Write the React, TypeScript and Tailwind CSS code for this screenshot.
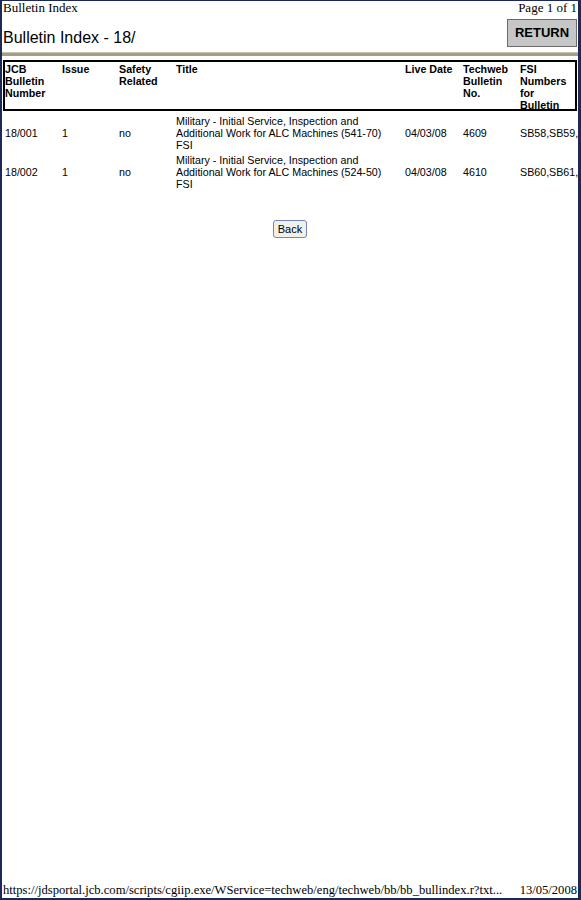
import React from 'react';

const serif = "font-['Liberation_Serif','Times_New_Roman',serif]";
const sans = "font-['Liberation_Sans',Arial,sans-serif]";

const headers = [
  ['JCB', 'Bulletin', 'Number'],
  ['Issue'],
  ['Safety', 'Related'],
  ['Title'],
  ['Live Date'],
  ['Techweb', 'Bulletin', 'No.'],
  ['FSI', 'Numbers', 'for', 'Bulletin'],
];

const rows = [
  {
    num: '18/001',
    issue: '1',
    safety: 'no',
    title: ['Military - Initial Service, Inspection and', 'Additional Work for ALC Machines (541-70)', 'FSI'],
    date: '04/03/08',
    techweb: '4609',
    fsi: 'SB58,SB59,',
  },
  {
    num: '18/002',
    issue: '1',
    safety: 'no',
    title: ['Military - Initial Service, Inspection and', 'Additional Work for ALC Machines (524-50)', 'FSI'],
    date: '04/03/08',
    techweb: '4610',
    fsi: 'SB60,SB61,',
  },
];

const cols = 'grid grid-cols-[57px_57px_57px_229px_58px_57px_1fr]';

export default function App() {
  return (
    <div className="flex h-[900px] w-[581px] flex-col overflow-hidden border-t border-b-2 border-l-2 border-r-[3px] border-[#1c2858] bg-white text-black">
      <div className={`flex items-start justify-between pl-[1px] pr-[1px] text-[13px] leading-[14px] ${serif}`}>
        <span>Bulletin Index</span>
        <span>Page 1 of 1</span>
      </div>

      <div className="flex items-center justify-between pl-[1px] pr-[1px] pt-[4px]">
        <h1 className={`pt-[10px] text-[16px] leading-[18px] ${sans}`}>Bulletin Index - 18/</h1>
        <button
          className={`h-[28px] w-[70px] border border-[#6a6a6a] bg-[#c6c6c6] text-[13px] font-bold ${sans}`}
        >
          RETURN
        </button>
      </div>

      <div className="mt-[5px] h-[4px] border-t border-[#c8c2b0] bg-[#a59d86]" />

      <div className={`px-[1px] pt-[4px] text-[10.7px] leading-[12px] ${sans}`}>
        <div className={`${cols} h-[51px] border-2 border-black pt-[1px] font-bold`}>
          {headers.map((h, i) => (
            <div key={i}>
              {h.map((l) => (
                <div key={l}>{l}</div>
              ))}
            </div>
          ))}
        </div>

        <div className="pt-[4px] pl-[2px]">
          {rows.map((r) => (
            <div key={r.num} className={`${cols} items-center pb-[3px]`}>
              <div>{r.num}</div>
              <div>{r.issue}</div>
              <div>{r.safety}</div>
              <div>
                {r.title.map((t) => (
                  <div key={t}>{t}</div>
                ))}
              </div>
              <div>{r.date}</div>
              <div>{r.techweb}</div>
              <div className="whitespace-nowrap">{r.fsi}</div>
            </div>
          ))}
        </div>

        <div className="flex justify-center pt-[27px]">
          <button
            className={`h-[18px] rounded-[3px] border border-[#7088b8] bg-[#f1f0ea] px-[4px] text-[11px] leading-[14px] ${sans}`}
          >
            Back
          </button>
        </div>
      </div>

      <div className={`mt-auto flex items-end justify-between whitespace-nowrap pl-[1px] pr-[1px] text-[12.6px] leading-[15px] ${serif}`}>
        <span>https://jdsportal.jcb.com/scripts/cgiip.exe/WService=techweb/eng/techweb/bb/bb_bullindex.r?txt...</span>
        <span>13/05/2008</span>
      </div>
    </div>
  );
}
